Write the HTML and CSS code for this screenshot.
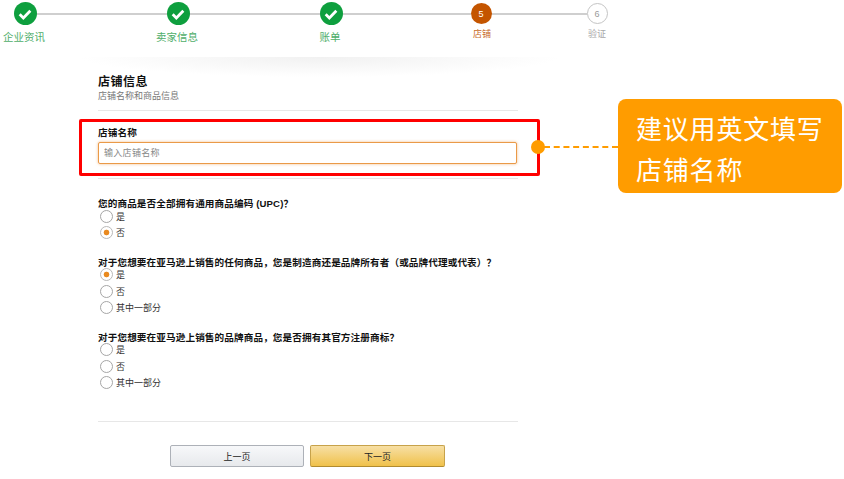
FILE: index.html
```html
<!DOCTYPE html>
<html lang="zh-CN">
<head>
    <meta charset="UTF-8">
    <meta name="viewport" content="width=device-width, initial-scale=1.0">
    <title>店铺信息</title>
    <link rel="stylesheet" href="styles.css">
</head>
<body>

<div class="stepper">
    <div class="step done">
        <span class="circle"><svg viewBox="0 0 24 24" width="16" height="16"><path d="M4 12.5l5.5 5.5L20 7" fill="none" stroke="#fff" stroke-width="4.2"/></svg></span>
        <span class="step-label">企业资讯</span>
    </div>
    <div class="line line-a"></div>
    <div class="step done">
        <span class="circle"><svg viewBox="0 0 24 24" width="16" height="16"><path d="M4 12.5l5.5 5.5L20 7" fill="none" stroke="#fff" stroke-width="4.2"/></svg></span>
        <span class="step-label">卖家信息</span>
    </div>
    <div class="line line-a"></div>
    <div class="step done">
        <span class="circle"><svg viewBox="0 0 24 24" width="16" height="16"><path d="M4 12.5l5.5 5.5L20 7" fill="none" stroke="#fff" stroke-width="4.2"/></svg></span>
        <span class="step-label">账单</span>
    </div>
    <div class="line line-b"></div>
    <div class="step current">
        <span class="circle">5</span>
        <span class="step-label">店铺</span>
    </div>
    <div class="line line-c"></div>
    <div class="step todo">
        <span class="circle">6</span>
        <span class="step-label">验证</span>
    </div>
</div>

<div class="shade"></div>

<form class="store-form">
    <h2 class="form-title">店铺信息</h2>
    <p class="form-sub">店铺名称和商品信息</p>
    <hr class="rule">

    <div class="name-box">
        <label class="question">店铺名称</label>
        <input class="name-input" type="text" placeholder="输入店铺名称">
    </div>
    <hr class="rule rule-name">

    <div class="group group-upc">
        <p class="question">您的商品是否全部拥有通用商品编码 (UPC)？</p>
        <div class="option"><span class="radio"></span>是</div>
        <div class="option"><span class="radio checked"></span>否</div>
    </div>

    <div class="group">
        <p class="question">对于您想要在亚马逊上销售的任何商品，您是制造商还是品牌所有者（或品牌代理或代表）？</p>
        <div class="option"><span class="radio checked"></span>是</div>
        <div class="option"><span class="radio"></span>否</div>
        <div class="option"><span class="radio"></span>其中一部分</div>
    </div>

    <div class="group">
        <p class="question">对于您想要在亚马逊上销售的品牌商品，您是否拥有其官方注册商标？</p>
        <div class="option"><span class="radio"></span>是</div>
        <div class="option"><span class="radio"></span>否</div>
        <div class="option"><span class="radio"></span>其中一部分</div>
    </div>

    <hr class="rule rule-end">

    <div class="buttons">
        <button class="btn btn-prev" type="button">上一页</button>
        <button class="btn btn-next" type="button">下一页</button>
    </div>
</form>

<!-- annotation on top of the page -->
<div class="connector"></div>
<div class="dot"></div>
<div class="callout">建议用英文填写<br>店铺名称</div>

</body>
</html>
```

FILE: styles.css
```css
body {
    font-family: "Liberation Sans", "Noto Sans CJK SC", sans-serif;
    background-color: #ffffff;
    color: #111111;
    margin: 0;
    position: relative;
    height: 479px;
    overflow: hidden;
}
.stepper {
    display: flex;
    height: 57px;
}
.step {
    width: 50px;
    flex: none;
    display: flex;
    flex-direction: column;
    align-items: center;
    position: relative;
    z-index: 1;
}
.circle {
    display: flex;
    align-items: center;
    justify-content: center;
    box-sizing: border-box;
    border-radius: 50%;
    font-size: 9px;
}
.step-label {
    white-space: nowrap;
    font-size: 10.5px;
    line-height: 14px;
}
.done .circle {
    width: 23px;
    height: 23px;
    margin-top: 2px;
    background-color: #0e9f3e;
}
.done .step-label {
    margin-top: 5px;
    margin-right: 2px;
    color: #4fae6a;
}
.current .circle {
    width: 21px;
    height: 21px;
    margin-top: 3px;
    background-color: #c45500;
    color: #ffffff;
}
.current .step-label {
    margin-top: 3px;
    margin-left: 2px;
    font-size: 9px;
    color: #c8691f;
}
.todo .circle {
    width: 21px;
    height: 21px;
    margin-top: 3px;
    background-color: #ffffff;
    border: 1px solid #c4c4c4;
    color: #9a9a9a;
}
.todo .step-label {
    margin-top: 3px;
    font-size: 9px;
    color: #a8a8a8;
}
.line {
    flex: none;
    height: 2px;
    margin: 13px -15px 0;
    background-color: #cfcfcf;
}
.line-a { width: 133px; }
.line-b { width: 130px; }
.line-c { width: 96px; }

.shade {
    height: 20px;
    margin: 0 284px 0 80px;
    background: radial-gradient(ellipse 50% 100% at 50% 0, #f1f1f1, #ffffff);
}

.store-form {
    width: 420px;
    margin-left: 98px;
    margin-top: -3px;
}
.form-title {
    margin: 0;
    font-size: 12px;
    line-height: 16px;
    letter-spacing: 0.5px;
    font-weight: bold;
}
.form-sub {
    margin: 0;
    font-size: 9px;
    line-height: 13px;
    color: #777777;
}
.rule {
    border: none;
    border-top: 1px solid #e7e7e7;
    margin: 7px 0 0;
}
.name-box {
    box-sizing: border-box;
    width: 461px;
    height: 57px;
    margin: 8px 0 0 -19px;
    padding: 4px 0 0 16px;
    border: 3px solid #ff0000;
    border-radius: 2px;
}
.question {
    display: block;
    margin: 0 0 -2px;
    font-size: 9.6px;
    line-height: 13px;
    letter-spacing: 0.12px;
    font-weight: bold;
    white-space: nowrap;
}
.name-input {
    display: block;
    box-sizing: border-box;
    width: 419px;
    height: 22px;
    margin-top: 5px;
    padding: 0 5px;
    border: 1px solid #ea9a48;
    border-radius: 2px;
    box-shadow: 0 0 3px rgba(228, 121, 17, 0.5);
    font-family: inherit;
    font-size: 9px;
    outline: none;
}
.name-input::placeholder {
    color: #888888;
    letter-spacing: 0.3px;
}
.rule-name {
    margin-top: 2px;
}
.group {
    margin-top: 14.5px;
}
.group-upc {
    margin-top: 18px;
}
.option {
    display: flex;
    align-items: center;
    height: 16.5px;
    font-size: 9px;
    color: #333333;
}
.radio {
    box-sizing: border-box;
    flex: none;
    width: 13px;
    height: 13px;
    margin: 0 3px 0 2px;
    border: 1px solid #a6a6a6;
    border-radius: 50%;
    background-color: #ffffff;
}
.radio.checked {
    border-color: #b9b9b9;
    background: radial-gradient(circle, #e98a20 0, #e98a20 2.5px, #ffffff 3.2px);
}
.rule-end {
    margin-top: 30px;
}
.buttons {
    display: flex;
    gap: 6px;
    margin: 23px 0 0 72px;
}
.btn {
    box-sizing: border-box;
    width: 134px;
    height: 22px;
    border-radius: 2px;
    font-family: inherit;
    font-size: 9px;
    color: #222222;
    padding: 0;
}
.btn-prev {
    background: linear-gradient(to bottom, #f7f8fa, #e7e9ec);
    border: 1px solid #adb1b8;
}
.btn-next {
    width: 135px;
    background: linear-gradient(to bottom, #f7dfa5, #f0c14b);
    border: 1px solid #c7a24a;
    border-bottom-color: #b18b2f;
}

.connector {
    position: absolute;
    left: 544px;
    top: 146px;
    width: 74px;
    border-top: 2px dashed #ff9c00;
}
.dot {
    position: absolute;
    left: 531px;
    top: 140px;
    width: 14px;
    height: 14px;
    border-radius: 50%;
    background-color: #ff9c00;
}
.callout {
    position: absolute;
    left: 618px;
    top: 99px;
    box-sizing: border-box;
    width: 224px;
    height: 94px;
    padding: 8px 0 0 18px;
    border-radius: 8px;
    background-color: #ff9c00;
    color: #ffffff;
    font-family: "Noto Sans CJK SC", sans-serif;
    font-size: 26px;
    line-height: 41px;
    letter-spacing: 0.8px;
    white-space: nowrap;
}
```
